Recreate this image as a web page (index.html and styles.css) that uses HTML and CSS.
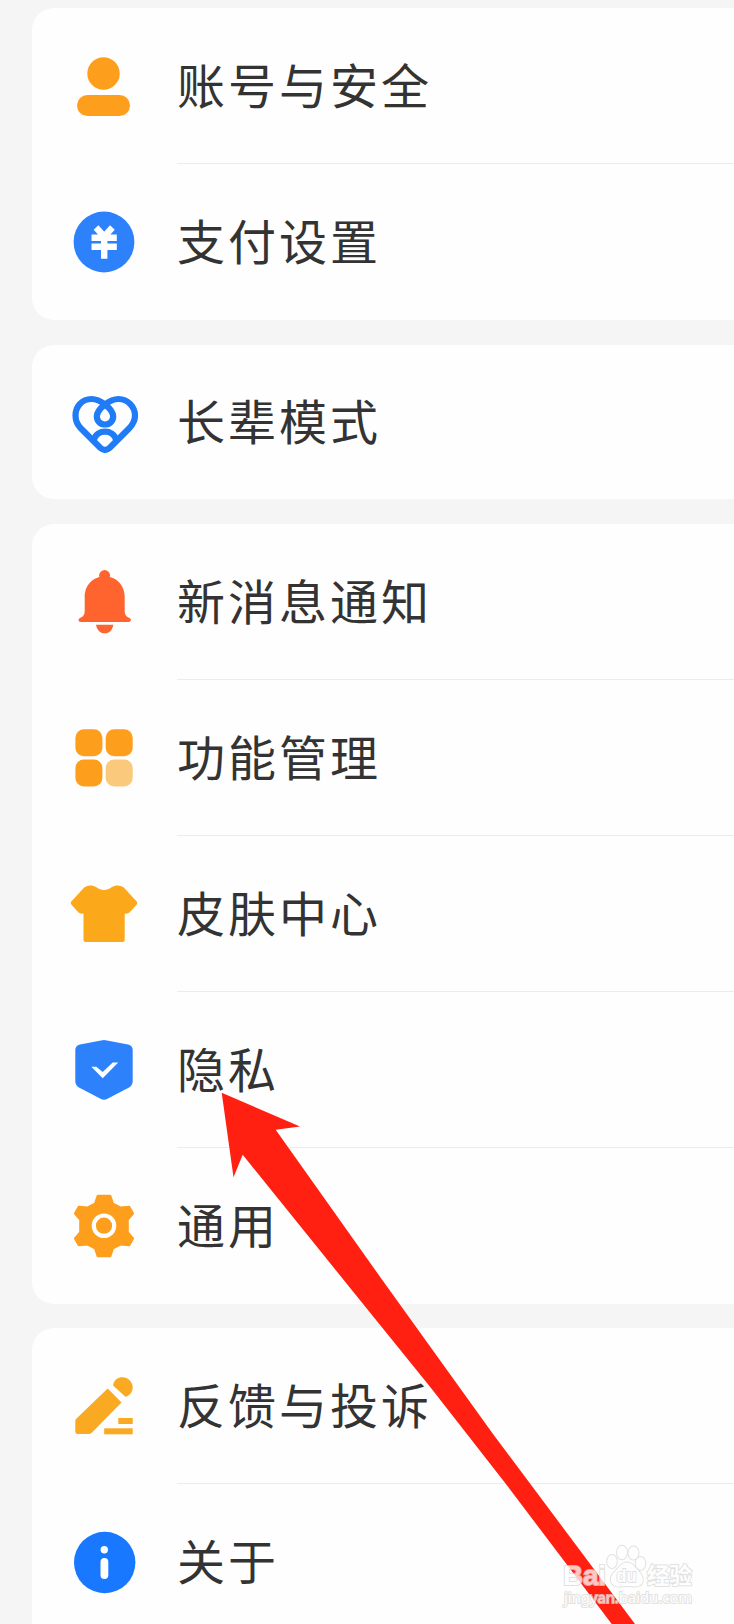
FILE: index.html
```html
<!DOCTYPE html>
<html lang="zh-CN">
<head>
    <meta charset="UTF-8">
    <meta name="viewport" content="width=device-width, initial-scale=1.0">
    <title>设置</title>
    <link rel="stylesheet" href="styles.css">
</head>
<body>
    <main class="settings">
        <section class="card">
            <div class="row">
                <svg class="icon orange" viewBox="0 0 80 80">
                    <circle cx="39.5" cy="27.5" r="16.2"/>
                    <rect x="13" y="49" width="53" height="21" rx="10.5"/>
                </svg>
                <div class="label">账号与安全</div>
            </div>
            <div class="row">
                <svg class="icon blue" viewBox="0 0 80 80">
                    <circle cx="40" cy="40" r="30.4"/>
                    <path class="yen" d="M32 25.5L40.2 34.5L48.4 25.5M27.5 35.8H52.8M27.5 44.8H52.8M40.2 34V56.8"/>
                </svg>
                <div class="label">支付设置</div>
            </div>
        </section>

        <section class="card single">
            <div class="row">
                <svg class="icon heart" viewBox="0 0 80 80">
                    <path d="M41 22.5C36 18.5 32 17 27.5 17C17.5 17 11.5 25 11.5 33.5C11.5 39 13.5 43 17 46.5L36.5 66Q41 70 45.5 66L65 46.5C68.5 43 71 39 71 33.5C71 25 64 17 54.5 17C50 17 46 18.5 41 22.5C36.5 26 32.8 30.5 32.8 34.5A8.2 8 0 0 0 49.2 34.5C49.2 30.5 45.5 26 41 22.5Z"/>
                    <path d="M30 57.5C33 47 49 47 52 57.5"/>
                </svg>
                <div class="label">长辈模式</div>
            </div>
        </section>

        <section class="card">
            <div class="row">
                <svg class="icon red" viewBox="0 0 80 80">
                    <circle cx="40.6" cy="13.6" r="5.5"/>
                    <path d="M20.7 35C20.7 23 29 14.5 40.7 14.5S60.7 23 60.7 35V48C60.7 52 61.5 54 64.5 55.5C68 56.5 67.5 60 64.5 60H17C14 60 13.5 56.5 17 55.5C20 54 20.7 52 20.7 48Z"/>
                    <path d="M32 62.7H49.3C48.5 68 45.5 71.3 40.7 71.3S33 68 32 62.7Z"/>
                </svg>
                <div class="label">新消息通知</div>
            </div>
            <div class="row">
                <svg class="icon orange" viewBox="0 0 80 80">
                    <rect x="11.4" y="11.2" width="27" height="27" rx="8.5"/>
                    <rect x="41.7" y="11.2" width="27" height="27" rx="8.5"/>
                    <rect x="11.4" y="41.5" width="27" height="27" rx="8.5"/>
                    <rect class="pale" x="41.7" y="41.5" width="27" height="27" rx="8.5"/>
                </svg>
                <div class="label">功能管理</div>
            </div>
            <div class="row">
                <svg class="icon amber" viewBox="0 0 80 80">
                    <path d="M7.3 27.5L19.5 14.2C22.5 11 28.5 10.5 32 13C37 17 43 17 48 13C51.5 10.5 57.5 11 60.5 14.2L72.7 27.5Q74 29 72.7 30.5L65.5 38.5Q64 40 60.7 39.5V66Q60.7 68 58.7 68H21.5Q19.5 68 19.5 66V39.5Q16 40 14.5 38.5L7.3 30.5Q6 29 7.3 27.5Z"/>
                </svg>
                <div class="label">皮肤中心</div>
            </div>
            <div class="row">
                <svg class="icon blue" viewBox="0 0 80 80">
                    <path d="M37 10.5Q40 9.5 43 10.5L64 14.5Q68.7 15.5 68.7 20V51Q68.7 55 65.5 57.2L43 69Q40 70.5 37 69L14.5 57.2Q11.3 55 11.3 51V20Q11.3 15.5 16 14.5Z"/>
                    <path class="check" d="M27.3 36.7H32.3L38.7 42L48.7 32.5H54.2L38.7 48.2Z"/>
                </svg>
                <div class="label">隐私</div>
            </div>
            <div class="row">
                <svg class="icon orange" viewBox="0 0 80 80">
                    <path class="gear" d="M34 10.2H46L48.5 17.8L56.5 22L65 21.2L68.5 27.5L63.3 33.5V46.5L68.5 52.5L65 58.8L56.5 58L48.5 62.2L46 69.8H34L31.5 62.2L23.5 58L15 58.8L11.5 52.5L16.7 46.5V33.5L11.5 27.5L15 21.2L23.5 22L31.5 17.8Z"/>
                    <circle class="ring" cx="40" cy="39.7" r="10.2"/>
                </svg>
                <div class="label">通用</div>
            </div>
        </section>

        <section class="card last">
            <div class="row">
                <svg class="icon pencil" viewBox="0 0 80 80">
                    <path d="M43.7 22.5L57.5 36.5L28 66.5Q26.5 68 24.5 68H14Q11.3 68 11.3 65.5V55Q11.3 53.5 12.5 52.5Z"/>
                    <path d="M49.2 18.5C50.5 13.5 54 11.2 58.3 11.2C64 11.2 68.7 15.8 68.7 21.3C68.7 25.5 66.5 29 62.5 30.5Q61.5 31 60.8 30.2L49.6 20Q49 19.3 49.2 18.5Z"/>
                    <rect x="54.3" y="52" width="14.4" height="6"/>
                    <rect x="40.2" y="62.3" width="28.5" height="6"/>
                </svg>
                <div class="label">反馈与投诉</div>
            </div>
            <div class="row">
                <svg class="icon info" viewBox="0 0 80 80">
                    <circle cx="40.7" cy="40.5" r="30.7"/>
                    <circle class="dot" cx="40.3" cy="27.7" r="3.7"/>
                    <rect class="dot" x="36.5" y="36" width="7.8" height="21" rx="3.9"/>
                </svg>
                <div class="label">关于</div>
            </div>
        </section>
    </main>

    <!-- arrow pointing at 隐私 -->
    <svg class="arrow" viewBox="0 0 734 1624">
        <path d="M221.7 1092.7L300 1126.5L275.7 1129.7L382.3 1280L493 1434L635 1624H611.7L506.7 1485L430 1386.7L343.7 1280L242.7 1154.7L233.5 1177.3Z"/>
    </svg>

    <svg class="watermark" viewBox="0 0 140 70">
        <text class="brand" x="7" y="41" textLength="43" lengthAdjust="spacingAndGlyphs">Bai</text>
        <g class="paw">
            <ellipse cx="56" cy="17.5" rx="4.8" ry="6.5"/>
            <ellipse cx="66" cy="8.5" rx="5" ry="6.8"/>
            <ellipse cx="77.5" cy="9" rx="5" ry="6.5"/>
            <ellipse cx="84.5" cy="19.5" rx="4.8" ry="6.5"/>
            <path d="M71 18.5C65.5 18.5 63.5 23 59.5 27C54.5 31.5 53.5 36 56.5 40C60 44 65.5 42 71 42S82 44 85.5 40C88.5 36 86.5 31.5 82.5 27C78.5 23 76.5 18.5 71 18.5Z"/>
        </g>
        <text class="du" x="60.5" y="38" textLength="20" lengthAdjust="spacingAndGlyphs">du</text>
        <text class="jy" x="91" y="40" textLength="45" lengthAdjust="spacingAndGlyphs">经验</text>
        <text class="site" x="8" y="58.5" textLength="128" lengthAdjust="spacingAndGlyphs">jingyan.baidu.com</text>
    </svg>
</body>
</html>
```

FILE: styles.css
```css
* {
    margin: 0;
    padding: 0;
    box-sizing: border-box;
}

body {
    position: relative;
    height: 1624px;
    overflow: hidden;
    background: #f5f5f5;
    color: #333;
    font-family: "Noto Sans CJK SC", sans-serif;
}

.settings {
    display: flex;
    flex-direction: column;
    gap: 24px;
    padding: 8px 0 0 32px;
}

.card {
    background: #fefefe;
    border-radius: 22px 0 0 22px;
}

.card.single {
    margin: 1px 0;
}

.card.last {
    border-radius: 22px 0 0 0;
}

.row {
    display: flex;
    align-items: center;
    height: 156px;
    padding-left: 32px;
}

.single .row {
    height: 154px;
}

.icon {
    width: 80px;
    height: 80px;
    flex: none;
}

.label {
    flex: 1;
    height: 100%;
    margin-left: 33px;
    border-bottom: 1px solid #ececec;
    font-size: 48px;
    line-height: 150px;
    letter-spacing: 3px;
    white-space: nowrap;
}

.single .label {
    line-height: 148px;
}

.row:last-child .label {
    border-bottom: none;
}

.orange {
    fill: #fd9f1c;
}

.amber {
    fill: #fca81b;
}

.pencil {
    fill: #f9a922;
}

.blue {
    fill: #2d82fc;
}

.red {
    fill: #ff642f;
}

.info {
    fill: #1878ff;
}

.pale {
    fill: #fbc97c;
}

.dot,
.check {
    fill: #fff;
}

.yen {
    fill: none;
    stroke: #fff;
    stroke-width: 6.4;
}

.heart {
    fill: none;
    stroke: #1f7bf6;
    stroke-width: 6.2;
    stroke-linejoin: round;
}

.gear {
    stroke: #fd9f1c;
    stroke-width: 3;
    stroke-linejoin: round;
}

.ring {
    fill: none;
    stroke: #fff;
    stroke-width: 4.2;
}

.arrow {
    position: absolute;
    top: 0;
    left: 0;
    width: 734px;
    height: 1624px;
    fill: #ff2012;
}

.watermark {
    position: absolute;
    left: 556px;
    top: 1544px;
    width: 140px;
    height: 70px;
    overflow: visible;
    fill: #fff;
    stroke: #d8d8d8;
    stroke-width: 2;
    paint-order: stroke;
    opacity: 0.75;
    font-family: "Liberation Sans", sans-serif;
}

.brand {
    font-size: 28px;
    font-weight: bold;
}

.paw {
    stroke-width: 2;
}

.du {
    font-size: 19px;
    font-weight: bold;
}

.jy {
    font-family: "Noto Sans CJK SC", sans-serif;
    font-size: 23px;
    font-weight: bold;
}

.site {
    font-family: "Noto Sans", sans-serif;
    font-size: 15px;
}
```
